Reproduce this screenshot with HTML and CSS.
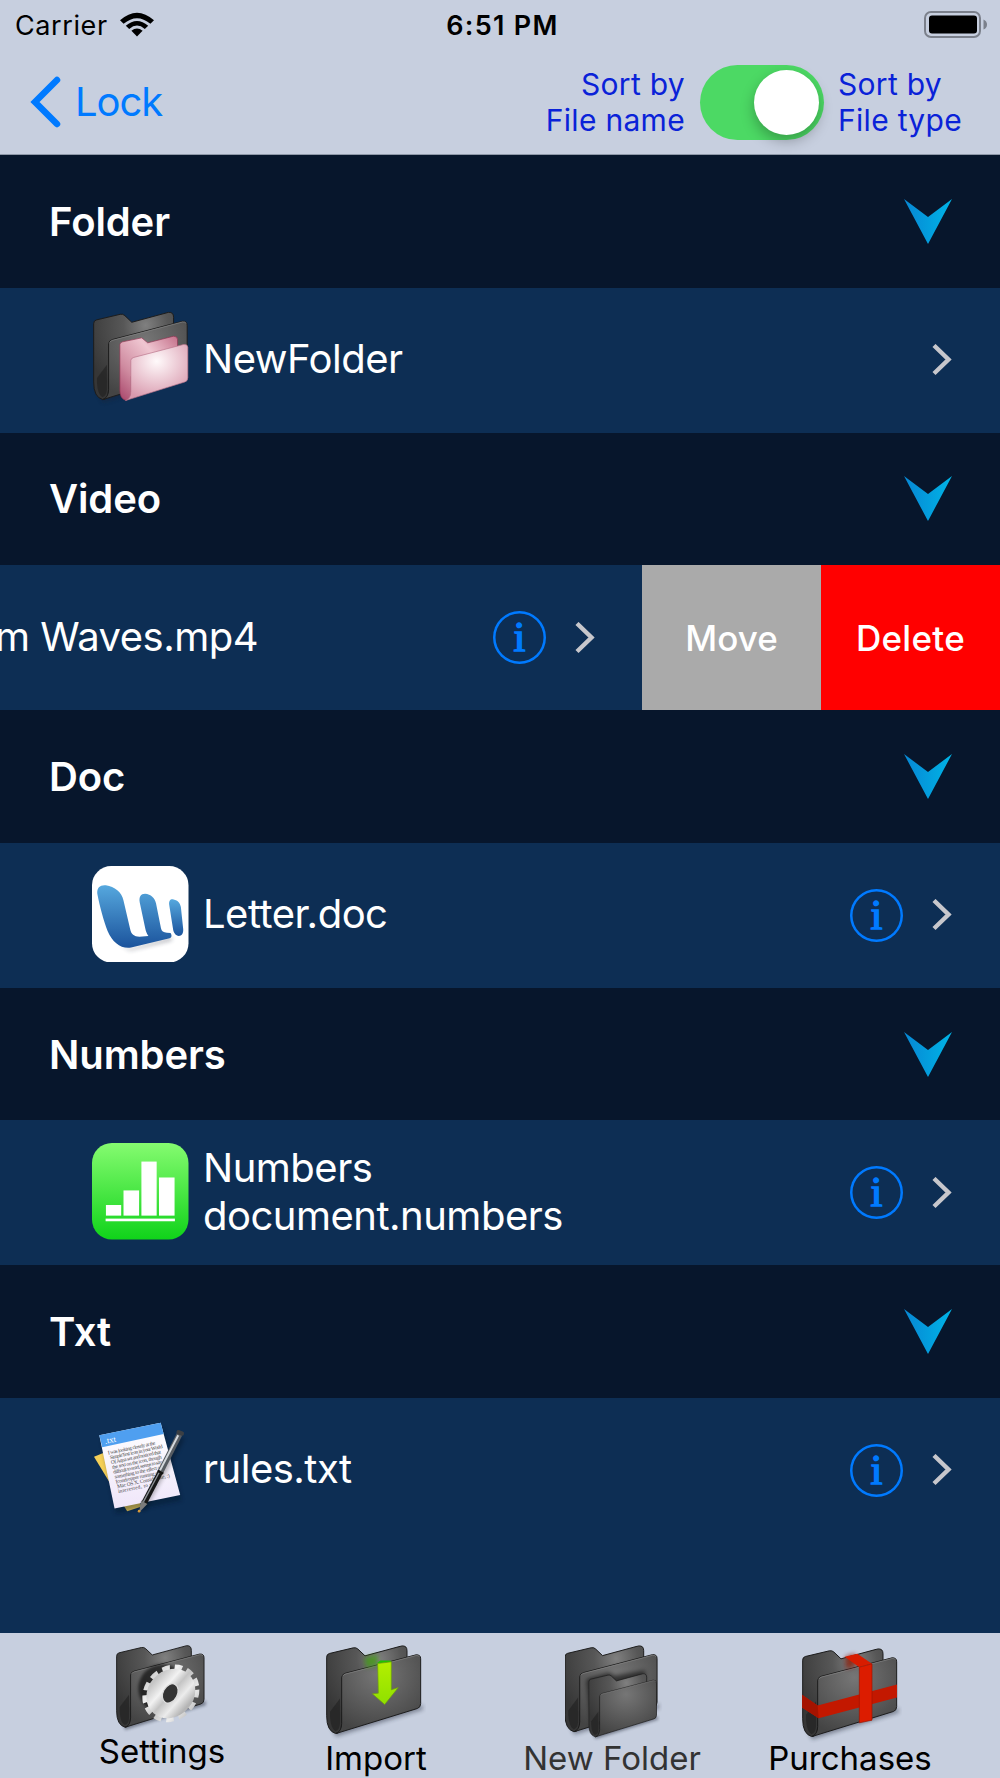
FILE: index.html
```html
<!DOCTYPE html>
<html lang="en">
  <head>
    <meta charset="UTF-8" />
    <title>Files</title>
    <link rel="stylesheet" href="styles.css">
  </head>
  <body>
    <!-- shared icons -->
    <svg class="defs" width="0" height="0">
      <defs>
        <radialGradient id="darkBack" cx="0.65" cy="0.15" r="0.8">
          <stop offset="0" stop-color="#808080" />
          <stop offset="0.35" stop-color="#575757" />
          <stop offset="1" stop-color="#363636" />
        </radialGradient>
        <radialGradient id="darkFront" cx="0.5" cy="0.25" r="0.75">
          <stop offset="0" stop-color="#767676" />
          <stop offset="1" stop-color="#444444" />
        </radialGradient>
        <radialGradient id="pinkFront" cx="0.5" cy="0.3" r="0.7">
          <stop offset="0" stop-color="#fffafb" />
          <stop offset="1" stop-color="#d99aae" />
        </radialGradient>
        <linearGradient id="pinkBack" x1="0" y1="1" x2="1" y2="0">
          <stop offset="0" stop-color="#a8456a" />
          <stop offset="0.3" stop-color="#cf8ba0" />
          <stop offset="0.65" stop-color="#efc6d1" />
          <stop offset="1" stop-color="#c4708a" />
        </linearGradient>
        <linearGradient id="arrowBlue">
          <stop offset="0" stop-color="#0787d4" />
          <stop offset="1" stop-color="#00b4e6" />
        </linearGradient>
        <linearGradient id="wordBlue" x1="0" y1="0" x2="0" y2="1">
          <stop offset="0" stop-color="#56a8de" />
          <stop offset="1" stop-color="#1b539c" />
        </linearGradient>
        <linearGradient id="numGreen" x1="0" y1="0" x2="0" y2="1">
          <stop offset="0" stop-color="#85fb70" />
          <stop offset="1" stop-color="#10d31a" />
        </linearGradient>
        <linearGradient id="gearGrey" x1="0" y1="0" x2="1" y2="1">
          <stop offset="0" stop-color="#c5c5c5" />
          <stop offset="0.3" stop-color="#f2f2f2" />
          <stop offset="0.5" stop-color="#c4c4c4" />
          <stop offset="0.75" stop-color="#ececec" />
          <stop offset="1" stop-color="#b5b5b5" />
        </linearGradient>
        <linearGradient id="paper" x1="0" y1="0" x2="0" y2="1">
          <stop offset="0" stop-color="#ffffff" />
          <stop offset="1" stop-color="#efe6fa" />
        </linearGradient>
        <linearGradient id="lime" x1="0" y1="0" x2="0" y2="1">
          <stop offset="0" stop-color="#b4ef00" />
          <stop offset="1" stop-color="#8fe000" />
        </linearGradient>
        <filter id="soft" x="-50%" y="-50%" width="200%" height="200%">
          <feGaussianBlur stdDeviation="6" />
        </filter>
      </defs>

      <symbol id="folder" viewBox="0 0 300 290">
        <path d="M10 230 L30 274 L290 194 V180Z" fill="#1a2233" opacity="0.45" filter="url(#soft)" />
        <path d="M2 36 Q2 27 10 25 L82 8 Q90 6 96 12 L117 32 L228 2 Q243 1 243 17 V120 L47 200 V235 Q47 265 29 265 Q2 258 2 212Z" fill="url(#darkBack)" stroke="#1c1c1c" stroke-width="3" />
        <path d="M12 200 V215 Q14 250 28 258 Q41 254 42 235 V160Z" fill="#1d1d1d" opacity="0.55" />
        <path d="M47 96 Q48 87 59 84 L270 29 Q284 28 284 41 V175 Q284 187 274 190 L30 265 Q47 258 47 235Z" fill="url(#darkFront)" stroke="#1c1c1c" stroke-width="3" />
        <path d="M50 93 Q52 88 60 86 L270 31 Q277 30 281 35" fill="none" stroke="#8a8a8a" stroke-width="2" />
      </symbol>

      <symbol id="down-arrow" viewBox="0 0 48 45">
        <path d="M0 0 L24 18 L48 0 L24 45Z" fill="url(#arrowBlue)" />
      </symbol>

      <symbol id="chevron" viewBox="0 0 20 32">
        <path d="M2 1.5 L16.5 15.5 L2 29.5" fill="none" stroke="#c7c7cc" stroke-width="4.4" />
      </symbol>
    </svg>

    <div class="screen">
      <header class="top-bar">
        <div class="status-bar">
          <div class="carrier">
            <span>Carrier</span>
            <svg width="34" height="25" viewBox="0 0 34 25">
              <path d="M0 8.3 Q17 -7 34 8.3 L30.4 11.8 Q17 0.6 3.6 11.8Z" />
              <path d="M5.8 13.8 Q17 4 28.2 13.8 L24.8 17 Q17 10.2 9.2 17Z" />
              <path d="M11.4 18.8 Q17 14.2 22.6 18.8 L17 24.5Z" />
            </svg>
          </div>
          <div class="time">6:51 PM</div>
          <svg class="battery" width="63" height="27" viewBox="0 0 63 27">
            <rect x="1" y="1" width="55" height="25" rx="6" fill="none" stroke="#7b808b" stroke-width="2" />
            <rect x="5" y="4.5" width="48" height="18" rx="3" />
            <path d="M59.5 8.5 Q63 10 63 13.5 Q63 17 59.5 18.5Z" fill="#7b808b" />
          </svg>
        </div>
        <div class="nav-bar">
          <div class="back">
            <svg width="31" height="52" viewBox="0 0 31 52">
              <path d="M27 4 L5 26 L27 48" fill="none" stroke="#007aff" stroke-width="6.5" stroke-linecap="round" />
            </svg>
            <span>Lock</span>
          </div>
          <div class="sort">
            <div class="sort-label right">Sort by<br>File name</div>
            <div class="switch"><div class="knob"></div></div>
            <div class="sort-label">Sort by<br>File type</div>
          </div>
        </div>
      </header>

      <main class="list">
        <div class="section">
          <h2>Folder</h2>
          <svg class="arrow"><use href="#down-arrow" /></svg>
        </div>
        <div class="row">
          <svg class="file-icon" viewBox="0 0 291 291">
            <use href="#folder" x="0" y="5" width="306" height="290" />
            <path d="M84 104 Q84 98 92 96 L150 84 L168 99 L246 79 Q258 79 258 89 V120 L118 200 V250 Q116 272 100 272 Q84 266 84 242Z" fill="url(#pinkBack)" stroke="#8d3450" stroke-width="2" />
            <path d="M117 152 Q117 146 126 143 L276 104 Q288 102 289 112 V204 Q289 214 280 217 L101 273 Q117 268 117 246Z" fill="url(#pinkFront)" stroke="#b9738a" stroke-width="2" />
          </svg>
          <div class="name">NewFolder</div>
          <svg class="chev"><use href="#chevron" /></svg>
        </div>

        <div class="section">
          <h2>Video</h2>
          <svg class="arrow"><use href="#down-arrow" /></svg>
        </div>
        <div class="row swiped">
          <div class="row-content">
            <div class="name">m Waves.mp4</div>
            <div class="info">i</div>
            <svg class="chev"><use href="#chevron" /></svg>
          </div>
          <div class="action move">Move</div>
          <div class="action delete">Delete</div>
        </div>

        <div class="section">
          <h2>Doc</h2>
          <svg class="arrow"><use href="#down-arrow" /></svg>
        </div>
        <div class="row">
          <svg class="file-icon" viewBox="0 0 291 291">
            <rect width="291" height="291" rx="58" fill="#fff" />
            <g transform="translate(4 5)" fill="#202838" opacity="0.4" filter="url(#soft)">
              <path d="M70 225 L110 245 L238 210 L235 220 L110 250Z" />
            </g>
            <path d="M16 84 C14 64 26 56 42 58 C68 62 90 78 95 104 L115 190 C118 206 127 213 143 213 L170 211 C165 204 163 198 161 190 L144 110 C141 94 147 84 160 84 C178 86 189 96 193 112 L208 188 C210 197 215 201 226 201 L237 202 Q244 214 234 218 L118 246 C88 251 62 231 47 196 C36 168 23 122 16 84Z" fill="url(#wordBlue)" />
            <path d="M233 118 C231 104 237 99 246 101 C260 104 266 112 268 124 L275 190 C276 204 270 211 262 211 C252 210 247 202 245 194Z" fill="url(#wordBlue)" />
          </svg>
          <div class="name">Letter.doc</div>
          <div class="info">i</div>
          <svg class="chev"><use href="#chevron" /></svg>
        </div>

        <div class="section">
          <h2>Numbers</h2>
          <svg class="arrow"><use href="#down-arrow" /></svg>
        </div>
        <div class="row">
          <svg class="file-icon" viewBox="0 0 291 291">
            <rect width="291" height="291" rx="60" fill="url(#numGreen)" />
            <g fill="#fff">
              <rect x="42" y="187" width="46" height="32" />
              <rect x="95" y="143" width="47" height="76" />
              <rect x="149" y="56" width="46" height="163" />
              <rect x="202" y="104" width="47" height="115" />
              <rect x="41" y="228" width="209" height="8" />
            </g>
          </svg>
          <div class="name">Numbers<br>document.numbers</div>
          <div class="info">i</div>
          <svg class="chev"><use href="#chevron" /></svg>
        </div>

        <div class="section">
          <h2>Txt</h2>
          <svg class="arrow"><use href="#down-arrow" /></svg>
        </div>
        <div class="row">
          <svg class="file-icon" viewBox="0 0 291 291">
            <path d="M6 108 L60 86 L150 258 L106 272Z" fill="#f4cf58" />
            <path d="M30 60 L215 20 L270 240 L72 280Z" fill="#061226" opacity="0.4" filter="url(#soft)" />
            <path d="M22 43 L207 5 L266 223 L68 264Z" fill="url(#paper)" />
            <path d="M22 43 L207 5 L216 39 L31 79Z" fill="#4f9ff0" />
            <g transform="translate(42 69) rotate(-12)" class="note">
              <text x="-2" y="0" class="note-title">.txt</text>
              <text x="0" y="33" textLength="146">I was looking closely at the</text>
              <text x="3" y="48" textLength="162">SimpleText icon in your World</text>
              <text x="3" y="63" textLength="154">Of Aqua set and noticed that</text>
              <text x="4" y="78" textLength="152">the text on the icon, though</text>
              <text x="4" y="93" textLength="150">difficult to read, seems to say</text>
              <text x="5" y="108" textLength="145">something to the effect of</text>
              <text x="5" y="123" textLength="138">Icondropper running on</text>
              <text x="6" y="138" textLength="162">Mac OS X. Consider me, :)</text>
              <text x="6" y="153" textLength="120">interested, to say</text>
            </g>
            <path d="M272 52 L152 268" stroke="#000" stroke-width="14" opacity="0.3" filter="url(#soft)" />
            <path d="M264 40 L206 154" stroke="#565b61" stroke-width="18" />
            <path d="M206 154 L156 250" stroke="#161616" stroke-width="17" />
            <path d="M260 43 L205 149" stroke="#d4d8dc" stroke-width="6" />
            <path d="M202 156 L155 244" stroke="#8f9499" stroke-width="4" />
            <path d="M261 34 L271 38" stroke="#3b3f44" stroke-width="13" stroke-linecap="round" />
            <path d="M198 150 L215 159" stroke="#111" stroke-width="6" />
            <path d="M148 240 L167 250 L142 276Z" fill="#7b7b7b" />
            <circle cx="142" cy="272" r="4" fill="#d79a3a" />
          </svg>
          <div class="name">rules.txt</div>
          <div class="info">i</div>
          <svg class="chev"><use href="#chevron" /></svg>
        </div>
      </main>

      <footer class="tool-bar">
        <div class="tool settings">
          <svg width="93" height="90" viewBox="0 0 300 290">
            <use href="#folder" width="300" height="290" />
            <circle cx="150" cy="140" r="78" fill="#000" opacity="0.6" filter="url(#soft)" />
            <g transform="translate(177 156) skewY(-8)">
              <circle r="78" fill="none" stroke="url(#gearGrey)" stroke-width="28" stroke-dasharray="22.7 15" />
              <circle r="50" fill="none" stroke="url(#gearGrey)" stroke-width="58" />
            </g>
            <ellipse cx="175" cy="156" rx="23" ry="33" transform="rotate(28 175 156)" fill="#333" stroke="#ddd" stroke-width="4" />
          </svg>
          <span>Settings</span>
        </div>
        <div class="tool">
          <svg width="100" height="97" viewBox="0 0 300 290">
            <use href="#folder" width="300" height="290" />
            <path d="M115 38 L155 27 V60 L120 68Z" fill="#3fa00c" opacity="0.7" filter="url(#soft)" />
            <path d="M152 55 L163 46 H193 L196 51Z" fill="#1fc400" />
            <path d="M155 55 L196 50 V134 L217 127 L176 178 L139 146 L157 144Z" fill="url(#lime)" stroke="#6c9a10" stroke-width="2" />
          </svg>
          <span>Import</span>
        </div>
        <div class="tool new-folder">
          <svg width="100" height="97" viewBox="0 0 300 290">
            <use href="#folder" x="-2" width="294" height="284" />
            <path d="M64 110 Q64 100 76 98 L130 82 L150 92 L240 76 V110 L80 250Z" fill="#000" opacity="0.55" filter="url(#soft)" />
            <use href="#folder" x="70" y="84" width="216" height="209" />
          </svg>
          <span>New Folder</span>
        </div>
        <div class="tool purchases">
          <svg width="100" height="97" viewBox="0 0 300 290">
            <use href="#folder" width="300" height="290" />
            <path d="M130 24 L160 16 V55 L132 62Z" fill="#8e1200" opacity="0.7" filter="url(#soft)" />
            <path d="M0 140 L47 172 L285 109 V148 L50 210 L0 178Z" fill="#c31800" />
            <path d="M0 140 L47 172 L50 210 L0 178Z" fill="#a51300" />
            <path d="M128 26 L166 17 L210 47 L172 57Z" fill="#d81c00" />
            <path d="M172 57 L210 47 V216 L172 224Z" fill="#dc1c00" stroke="#9d1400" stroke-width="2" />
          </svg>
          <span>Purchases</span>
        </div>
      </footer>
    </div>
  </body>
</html>
```
FILE: styles.css
```css
body {
  margin: 0;
  font-family: Inter, "Liberation Sans", sans-serif;
  background: #0d2e54;
}

.defs {
  position: absolute;
}

.screen {
  width: 1000px;
  height: 1778px;
  display: flex;
  flex-direction: column;
  overflow: hidden;
}

/* top bar */
.top-bar {
  height: 155px;
  box-sizing: border-box;
  background: #c7cfdf;
  border-bottom: 1px solid #8e98a8;
}

.status-bar {
  display: grid;
  grid-template-columns: 1fr auto 1fr;
  align-items: center;
  height: 50px;
  padding: 0 13px 0 15px;
  font-size: 27px;
}

.carrier {
  display: flex;
  align-items: center;
  gap: 12px;
  letter-spacing: 0.6px;
}

.time {
  padding-left: 3px;
  font-weight: 600;
  letter-spacing: 1.3px;
}

.battery {
  justify-self: end;
}

.carrier svg,
.battery {
  margin-bottom: 2px;
}

.nav-bar {
  display: flex;
  justify-content: space-between;
  height: 104px;
  padding: 0 38px 0 30px;
}

.back {
  display: flex;
  align-items: center;
  gap: 14px;
  color: #007aff;
  font-size: 40px;
  letter-spacing: -1.1px;
}

.back span {
  padding-bottom: 1px;
}

.sort {
  display: flex;
  align-items: center;
  gap: 14.5px;
}

.sort-label {
  color: #0a22d8;
  font-size: 30px;
  line-height: 36.5px;
  letter-spacing: 0.3px;
}

.right {
  text-align: right;
}

.switch {
  width: 124px;
  height: 75px;
  box-sizing: border-box;
  padding: 5px;
  border-radius: 38px;
  background: #4cd964;
  display: flex;
  justify-content: flex-end;
}

.knob {
  width: 65px;
  height: 65px;
  border-radius: 50%;
  background: white;
  box-shadow: 0 6px 14px rgba(0, 0, 0, 0.28);
}

/* file list */
.list {
  flex: 1;
}

.section {
  display: flex;
  align-items: center;
  justify-content: space-between;
  height: 132.6px;
  padding: 0 48.5px 0 49px;
  background: #07162c;
}

h2 {
  margin: 0;
  color: white;
  font-size: 40px;
  font-weight: 600;
  letter-spacing: -0.1px;
}

.arrow {
  width: 48px;
  height: 45px;
}

.row {
  display: flex;
  align-items: center;
  height: 145px;
  padding: 0 48px 0 92px;
  color: white;
}

.file-icon {
  width: 96.5px;
  height: 96.5px;
  margin: 0 14.5px 3px 0;
}

.name {
  flex: 1;
  padding-bottom: 2px;
  font-size: 40px;
  line-height: 48px;
  letter-spacing: -0.5px;
  white-space: nowrap;
}

.info {
  width: 53px;
  height: 53px;
  margin-right: 29px;
  border-radius: 50%;
  box-shadow: inset 0 0 0 2.5px #007aff;
  color: #007aff;
  font: 43px "Liberation Serif", serif;
  line-height: 52px;
  text-align: center;
  -webkit-text-stroke: 1.5px #007aff;
}

.chev {
  width: 20px;
  height: 32px;
}

.swiped {
  padding: 0;
}

.row-content {
  width: 642px;
  height: 100%;
  box-sizing: border-box;
  padding-right: 47px;
  display: flex;
  align-items: center;
}

.swiped .name {
  margin-left: -5px;
}

.action {
  width: 179px;
  height: 100%;
  display: flex;
  align-items: center;
  justify-content: center;
  font-size: 35px;
  font-weight: 500;
}

.move {
  background: #aaaaaa;
}

.delete {
  background: #ff0000;
  letter-spacing: 0.3px;
}

.note {
  font: 16px "Liberation Serif", serif;
  fill: #444;
}

.note-title {
  font-size: 26px;
  fill: white;
}

/* bottom bar */
.tool-bar {
  height: 145px;
  box-sizing: border-box;
  padding: 12px 0 0 62px;
  display: flex;
  background: #c7cfdf;
}

.tool {
  width: 200px;
  margin-right: 14px;
  display: flex;
  flex-direction: column;
  align-items: center;
  color: black;
  font-size: 33px;
  line-height: 40px;
}

.tool svg {
  margin-bottom: -4px;
}

.settings svg {
  margin-left: 1px;
}

.new-folder {
  margin: 0 38px 0 22px;
  color: #333;
}

.new-folder svg {
  margin-left: 5px;
}

.purchases {
  margin-right: 0;
}

.purchases svg {
  margin: 3px 0 -7px 4px;
}
```
